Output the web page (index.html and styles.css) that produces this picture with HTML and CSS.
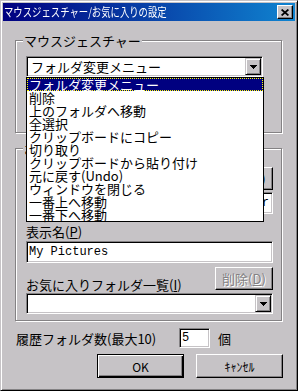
FILE: index.html
```html
<!DOCTYPE html>
<html lang="ja">
<head>
<meta charset="utf-8">
<link rel="stylesheet" href="styles.css">
</head>
<body>
<div class="window">
  <div class="titlebar">
    <span class="title">マウスジェスチャー/お気に入りの設定</span>
    <span class="close"><svg width="8" height="7" viewBox="0 0 8 7"><path d="M0.6 0.5L7.4 6.5M7.4 0.5L0.6 6.5" stroke="#000" stroke-width="1.7" fill="none"/></svg></span>
  </div>
  <div class="body">
    <div class="group g1">
      <div class="legend">マウスジェスチャー</div>
      <div class="combo-wrap">
        <div class="combo">
          <span class="combo-text">フォルダ変更メニュー</span>
          <span class="drop"><svg width="7" height="4" viewBox="0 0 7 4"><path d="M0 0h7v1h-1v1h-1v1h-1v1h-1v-1h-1v-1h-1v-1h-1z" fill="#000"/></svg></span>
        </div>
        <ul class="list">
          <li class="sel">フォルダ変更メニュー</li>
          <li>削除</li>
          <li>上のフォルダへ移動</li>
          <li>全選択</li>
          <li>クリップボードにコピー</li>
          <li>切り取り</li>
          <li>クリップボードから貼り付け</li>
          <li>元に戻す(Undo)</li>
          <li>ウィンドウを閉じる</li>
          <li>一番上へ移動</li>
          <li>一番下へ移動</li>
        </ul>
      </div>
    </div>
    <div class="group g2">
      <div class="legend">お気に入りフォルダ</div>
      <div class="row-right"><button class="btn">変更(<u>C</u>)</button></div>
      <div class="field path"><span>C:\Documents and Settings\Owner</span></div>
      <div class="label-p">表示名(<u>P</u>)</div>
      <div class="field name-field">My Pictures</div>
      <div class="row-fav">
        <span class="fav-label">お気に入りフォルダ一覧(<u>I</u>)</span>
        <button class="btn disabled">削除(<u>D</u>)</button>
      </div>
      <div class="combo combo2">
        <span class="combo-text"></span>
        <span class="drop"><svg width="7" height="4" viewBox="0 0 7 4"><path d="M0 0h7v1h-1v1h-1v1h-1v1h-1v-1h-1v-1h-1v-1h-1z" fill="#000"/></svg></span>
      </div>
    </div>
    <div class="hist">
      <span class="hist-label">履歴フォルダ数(最大10)</span>
      <span class="count">5</span>
      <span class="unit">個</span>
    </div>
    <div class="actions">
      <button class="btn btn-ok">OK</button>
      <button class="btn btn-cancel">ｷｬﾝｾﾙ</button>
    </div>
  </div>
</div>
</body>
</html>
```

FILE: styles.css
```css
body {
  margin: 0;
  font-family: "Noto Sans CJK JP", sans-serif;
  font-size: 13px;
  color: #000;
}

.window {
  width: 298px;
  height: 391px;
  box-sizing: border-box;
  background: #c6c3c6;
  border: 1px solid;
  border-color: #c6c3c6 #000 #000 #c6c3c6;
  box-shadow: inset 1px 1px #fff, inset -1px -1px #848284;
  padding: 2px;
}

.titlebar {
  height: 18px;
  display: flex;
  align-items: center;
  justify-content: space-between;
  background: linear-gradient(to right, #000080, #1084d0);
  padding: 0 2px 0 1px;
}

.title {
  color: #fff;
  font-size: 12px;
  line-height: 18px;
  white-space: nowrap;
  display: inline-block;
  transform: scaleX(0.78);
  transform-origin: left center;
}

.close {
  width: 16px;
  height: 14px;
  box-sizing: border-box;
  background: #c6c3c6;
  border: 1px solid;
  border-color: #fff #000 #000 #fff;
  box-shadow: inset -1px -1px #848284;
  display: flex;
  align-items: center;
  justify-content: center;
}

.body {
  padding: 19px 0 0 12px;
}

.group {
  position: relative;
  box-sizing: border-box;
  width: 267px;
  border: 1px solid #848284;
  box-shadow: 1px 1px 0 #fff, inset 1px 1px 0 #fff;
  padding: 0 8px 0 10px;
}

.g1 { height: 93px; }
.g2 { height: 173px; margin-top: 15px; }

.legend {
  width: fit-content;
  margin: -8px 0 0 -3px;
  padding: 0 1px;
  background: #c6c3c6;
  line-height: 15px;
  white-space: nowrap;
}

.combo-wrap {
  position: relative;
  margin-top: 8px;
  width: 237px;
}

.combo {
  box-sizing: border-box;
  height: 21px;
  background: #fff;
  border: 1px solid;
  border-color: #848284 #fff #fff #848284;
  box-shadow: inset 1px 1px #000, inset -1px -1px #c6c3c6;
  padding: 1px;
  display: flex;
  align-items: center;
}

.combo-text {
  flex: 1;
  padding-left: 3px;
  line-height: 17px;
  white-space: nowrap;
}

.drop {
  width: 16px;
  height: 17px;
  box-sizing: border-box;
  background: #c6c3c6;
  border: 1px solid;
  border-color: #c6c3c6 #000 #000 #c6c3c6;
  box-shadow: inset 1px 1px #fff, inset -1px -1px #848284;
  display: flex;
  align-items: center;
  justify-content: center;
}

.list {
  position: absolute;
  top: 21px;
  left: 0;
  width: 238px;
  box-sizing: border-box;
  border: 1px solid #000;
  background: #fff;
  margin: 0;
  padding: 0;
  list-style: none;
  z-index: 2;
}

.list li {
  height: 13px;
  line-height: 13px;
  padding-left: 2px;
  white-space: nowrap;
}

.list li.sel {
  box-sizing: border-box;
  background: #000080;
  color: #fff;
  border: 1px dotted #ffff00;
  line-height: 11px;
  padding-left: 1px;
}

.row-right {
  margin-top: 11px;
  display: flex;
  justify-content: flex-end;
}

.btn {
  box-sizing: border-box;
  width: 58px;
  height: 23px;
  padding: 0;
  margin: 0;
  font-family: inherit;
  font-size: 13px;
  color: #000;
  background: #c6c3c6;
  border: 1px solid;
  border-color: #fff #000 #000 #fff;
  box-shadow: inset -1px -1px #848284;
  line-height: 15px;
}

.btn.disabled {
  color: #848284;
  text-shadow: 1px 1px 0 #fff;
}

.field {
  box-sizing: border-box;
  height: 22px;
  margin-top: 2px;
  background: #fff;
  border: 1px solid;
  border-color: #848284 #fff #fff #848284;
  box-shadow: inset 1px 1px #000, inset -1px -1px #c6c3c6;
  font-family: "Liberation Mono", monospace;
  font-size: 12px;
  line-height: 20px;
  padding-left: 2px;
  overflow: hidden;
  white-space: nowrap;
}

.path {
  display: flex;
  justify-content: flex-end;
  padding-right: 3px;
}

.label-p {
  margin-top: 10px;
  line-height: 15px;
}

.row-fav {
  margin-top: 4px;
  height: 23px;
  display: flex;
  justify-content: space-between;
}

.fav-label {
  align-self: flex-end;
  line-height: 15px;
  margin-bottom: -2px;
  white-space: nowrap;
}

.combo2 {
  margin-top: 3px;
}

.hist {
  margin-top: 7px;
  height: 20px;
  display: flex;
  align-items: center;
}

.hist-label {
  width: 164px;
  box-sizing: border-box;
  padding-left: 1px;
  line-height: 15px;
  white-space: nowrap;
}

.count {
  box-sizing: border-box;
  width: 31px;
  height: 20px;
  background: #fff;
  border: 1px solid;
  border-color: #848284 #fff #fff #848284;
  box-shadow: inset 1px 1px #000, inset -1px -1px #c6c3c6;
  font-family: "Liberation Mono", monospace;
  font-size: 12px;
  line-height: 18px;
  padding-left: 2px;
}

.unit {
  margin-left: 8px;
  line-height: 15px;
}

.actions {
  margin-top: 6px;
  display: flex;
  gap: 12px;
  padding-left: 82px;
}

.btn-ok,
.btn-cancel {
  width: 87px;
  height: 24px;
  font-size: 12px;
}

.btn-ok {
  border-color: #000;
  box-shadow: inset 1px 1px #fff, inset -1px -1px #000, inset -2px -2px #848284;
}
```
